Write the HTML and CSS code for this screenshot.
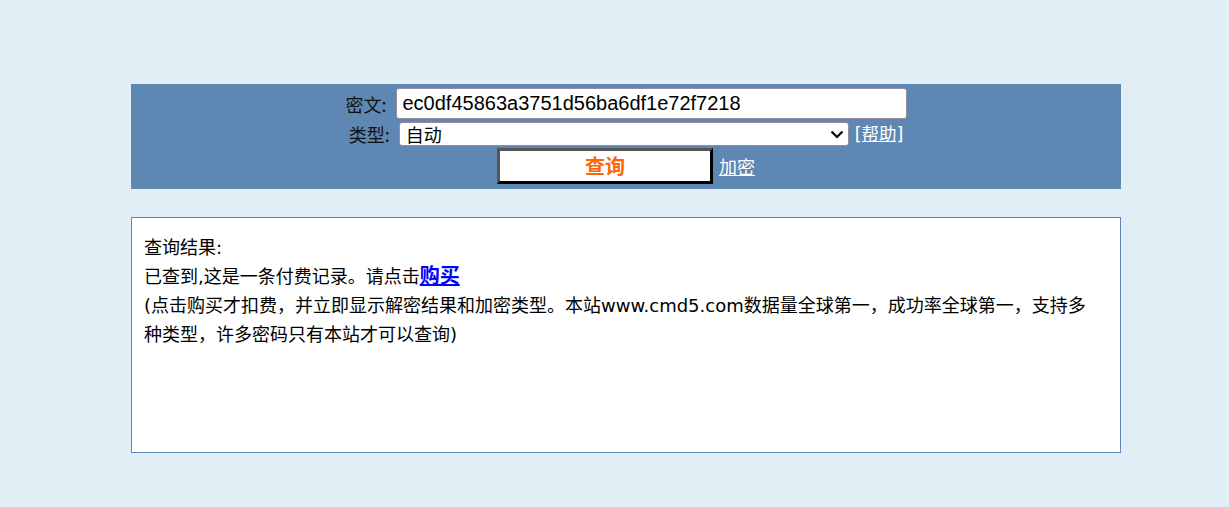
FILE: index.html
```html
<!DOCTYPE html>
<html lang="zh-CN">
<head>
<meta charset="utf-8">
<title>cmd5</title>
<link rel="stylesheet" href="styles.css">
</head>
<body>
<div class="page">
  <form class="panel">
    <div class="row">
      <label class="lbl">密文:</label>
      <input class="txt" type="text" value="ec0df45863a3751d56ba6df1e72f7218">
    </div>
    <div class="row row2">
      <label class="lbl">类型:</label>
      <span class="selwrap">
        <select class="sel"><option>自动</option></select>
        <svg class="arrow" width="14" height="9" viewBox="0 0 14 9"><path d="M1.5 1.5 L7 7 L12.5 1.5" fill="none" stroke="#000" stroke-width="2.2"/></svg>
      </span>
      <a class="help" href="#">[帮助]</a>
    </div>
    <div class="row row3">
      <button class="btn" type="button">查询</button>
      <a class="enc" href="#">加密</a>
    </div>
  </form>
  <div class="result">
    <div>查询结果:</div>
    <div>已查到,这是一条付费记录。请点击<a class="buy" href="#">购买</a></div>
    <div>(点击购买才扣费，并立即显示解密结果和加密类型。本站www.cmd5.com数据量全球第一，成功率全球第一，支持多种类型，许多密码只有本站才可以查询)</div>
  </div>
</div>
</body>
</html>
```

FILE: styles.css
```css
html, body {
  margin: 0;
  padding: 0;
  background: #e1eef6;
}
body {
  font-family: "DejaVu Sans", "Noto Sans CJK SC", sans-serif;
  font-size: 18px;
  color: #000;
}
.page {
  width: 990px;
  margin-left: 131px;
  padding-top: 84px;
}
.panel {
  background: #5e88b3;
  height: 105px;
  box-sizing: border-box;
  padding-top: 4px;
  display: flex;
  flex-direction: column;
  align-items: center;
}
.row {
  display: flex;
  align-items: center;
  justify-content: center;
}
.row2 { margin-top: 3px; }
.row3 { margin-top: 2px; }
.lbl {
  font-family: "Noto Sans CJK SC", sans-serif;
  font-size: 18px;
  color: #111;
  margin-right: 9px;
  line-height: 20px;
}
.txt {
  width: 511px;
  height: 31px;
  box-sizing: border-box;
  border: 1px solid #8f8f9d;
  border-radius: 3px;
  background: #fff;
  font-family: "Liberation Sans", Arial, sans-serif;
  font-size: 20px;
  padding: 0 6px;
  margin: 0;
  color: #000;
}
.selwrap {
  position: relative;
  display: block;
  width: 450px;
  height: 24px;
}
.sel {
  -webkit-appearance: none;
  appearance: none;
  display: block;
  width: 450px;
  height: 24px;
  box-sizing: border-box;
  border: 1px solid #8f8f9d;
  border-radius: 3px;
  background: #fff;
  font-family: "Noto Sans CJK SC", sans-serif;
  font-size: 18px;
  padding: 0 6px;
  margin: 0;
  color: #000;
  line-height: 22px;
}
.arrow {
  position: absolute;
  right: 5px;
  top: 8px;
  pointer-events: none;
}
.help {
  color: #fff;
  margin-left: 6px;
  font-family: "DejaVu Sans", "Noto Sans CJK SC", sans-serif;
  font-size: 17.5px;
  text-decoration: underline;
  line-height: 20px;
}
.btn {
  width: 216px;
  height: 36px;
  box-sizing: border-box;
  background: #fff;
  border-style: solid;
  border-width: 3px;
  border-color: #555 #000 #000 #555;
  color: #ff6600;
  font-family: "Noto Sans CJK SC", sans-serif;
  font-weight: bold;
  font-size: 20px;
  padding: 0;
  margin: 0;
  line-height: 28px;
}
.enc {
  color: #fff;
  margin-left: 6px;
  font-family: "Noto Sans CJK SC", sans-serif;
  font-size: 18px;
  text-decoration: underline;
  line-height: 20px;
}
.result {
  margin-top: 28px;
  height: 236px;
  box-sizing: border-box;
  background: #fff;
  border: 1px solid #5e88b3;
  padding: 15px 30px 0 12px;
  line-height: 29px;
  font-size: 18px;
}
.buy {
  color: #0000ff;
  font-weight: bold;
  font-size: 20px;
  text-decoration: underline;
}
```
